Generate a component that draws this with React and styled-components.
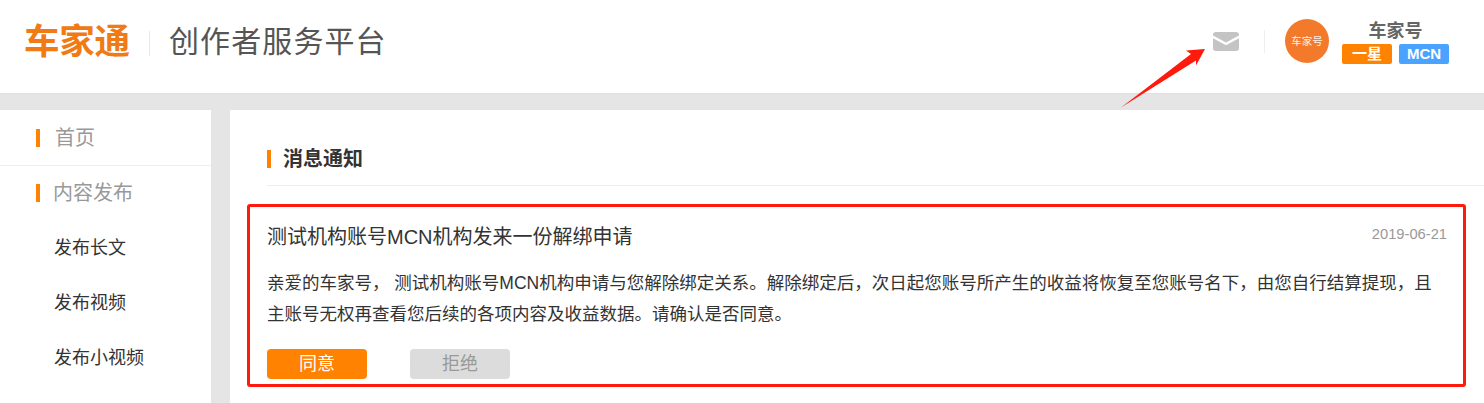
import React from "react";
import styled, { createGlobalStyle } from "styled-components";

const Global = createGlobalStyle`
  html, body { margin: 0; padding: 0; background: #e5e5e5; }
  body { font-family: "Liberation Sans", "Noto Sans CJK SC", sans-serif; }
  * { box-sizing: border-box; }
`;
const Page = styled.div`
  position: relative; width: 1484px; height: 403px; overflow: hidden; background: #e5e5e5;
`;
const Header = styled.header`
  height: 94px; background: #fff; border-bottom: 1px solid #dfdfdf;
  display: flex; align-items: center; padding: 0 35px 0 24px;
`;
const Logo = styled.div`
  width: 106px; font-size: 35.5px; line-height: 36px; font-weight: 700; color: #f07a14; white-space: nowrap;
  letter-spacing: -0.2px; margin-top: -9px;
`;
const LogoSep = styled.span`
  width: 1px; height: 25px; background: #e8e8e8; margin: -7px 19px 0 19px;
`;
const Platform = styled.div`
  font-size: 30px; line-height: 36px; font-weight: 400; color: #555; letter-spacing: 1.1px; margin-top: -9px;
`;
const Right = styled.div`
  margin-left: auto; display: flex; align-items: center;
`;
const Mail = styled.svg`
  width: 26px; height: 19px; display: block; margin-top: -11px;
`;
const RightSep = styled.span`
  width: 1px; height: 23px; background: #eee; margin: -11px 20px 0 25px;
`;
const Avatar = styled.div`
  width: 44px; height: 44px; border-radius: 50%; background: #f47a2b; color: #fff0e6;
  font-size: 10.5px; line-height: 44px; text-align: center; white-space: nowrap; margin-top: -11px;
`;
const User = styled.div`
  width: 107px; margin-left: 13px; display: flex; flex-direction: column; align-items: center; margin-top: -11px;
`;
const UserName = styled.div`
  font-size: 18px; line-height: 26px; height: 26px; font-weight: 700; color: #666; margin-right: 0;
`;
const Badges = styled.div`
  display: flex; gap: 7px;
`;
const Badge = styled.span`
  width: 50px; height: 20px; border-radius: 2px; background: ${p => p.$bg}; color: #fff;
  font-size: 15px; line-height: 20px; font-weight: 700; text-align: center;
`;
const Body = styled.div`
  display: flex; gap: 19px; padding-top: 16px; height: 309px;
`;
const Sidebar = styled.aside`
  width: 211px; background: #fff; flex: none;
`;
const HomeRow = styled.div`
  height: 56px; border-bottom: 1px solid #eee; display: flex; align-items: center; padding-left: 36px;
`;
const SectionRow = styled.div`
  height: 53px; display: flex; align-items: center; padding-left: 36px;
`;
const Mark = styled.i`
  display: block; flex: none; width: 4px; height: 18px; background: #ff8200;
`;
const NavTitle = styled.span`
  font-size: 20px; line-height: 28px; color: #999; margin-left: ${p => p.$gap}px;
`;
const SubList = styled.div`
  padding-top: 2px;
`;
const SubItem = styled.div`
  height: 55px; line-height: 55px; padding-left: 54px; font-size: 18px; color: #333;
`;
const Main = styled.main`
  flex: 1; background: #fff; padding: 0 0 0 17px; min-width: 0;
`;
const Heading = styled.div`
  margin-left: 20px; height: 76px; border-bottom: 1px solid #eee;
  display: flex; align-items: center; padding-top: 23px;
  h2 { margin: 0 0 0 12px; font-size: 20px; line-height: 28px; font-weight: 700; color: #333; }
`;
const Card = styled.section`
  width: 1219px; height: 183px; margin-top: 18px; border: 3px solid #ff1a0e; border-radius: 3px;
  padding: 16px 16px 0 17px;
`;
const CardTop = styled.div`
  display: flex; justify-content: space-between;
`;
const CardTitle = styled.h3`
  margin: 0; font-size: 20px; line-height: 28px; font-weight: 400; color: #333;
`;
const CardDate = styled.time`
  font-size: 14.7px; line-height: 22px; color: #999; margin-right: 0;
`;
const Text = styled.p`
  margin: 17px 0 0; width: 1180px; font-size: 17.5px; line-height: 31px; color: #333;
`;
const Actions = styled.div`
  display: flex; gap: 43px; margin-top: 19px;
`;
const Btn = styled.button`
  width: 100px; height: 30px; border: 0; padding: 0; border-radius: 4px;
  background: ${p => (p.$primary ? "#ff8200" : "#dcdcdc")}; color: ${p => (p.$primary ? "#fff" : "#999")};
  font-family: inherit; font-size: 18px; line-height: 30px;
`;
const Arrow = styled.svg`
  position: absolute; left: 1115px; top: 44px; width: 95px; height: 68px; pointer-events: none;
`;

export default function App() {
  return (
    <Page>
      <Global />
      <Header>
        <Logo>车家通</Logo>
        <LogoSep />
        <Platform>创作者服务平台</Platform>
        <Right>
          <Mail viewBox="0 0 26 19" aria-label="消息">
            <path fill="#c4c4c4" d="M3 0h20a3 3 0 0 1 3 3v.4L13 10.400 0 3.400V3A3 3 0 0 1 3 0Z" />
            <path fill="#c4c4c4" d="M0 6.200 13 13.200l13-7V16a3 3 0 0 1-3 3H3a3 3 0 0 1-3-3Z" />
          </Mail>
          <RightSep />
          <Avatar>车家号</Avatar>
          <User>
            <UserName>车家号</UserName>
            <Badges>
              <Badge $bg="#ff8200">一星</Badge>
              <Badge $bg="#4aa3ff">MCN</Badge>
            </Badges>
          </User>
        </Right>
      </Header>
      <Body>
        <Sidebar>
          <HomeRow><Mark /><NavTitle $gap={15}>首页</NavTitle></HomeRow>
          <SectionRow><Mark /><NavTitle $gap={13}>内容发布</NavTitle></SectionRow>
          <SubList>
            <SubItem>发布长文</SubItem>
            <SubItem>发布视频</SubItem>
            <SubItem>发布小视频</SubItem>
          </SubList>
        </Sidebar>
        <Main>
          <Heading><Mark /><h2>消息通知</h2></Heading>
          <Card>
            <CardTop>
              <CardTitle>测试机构账号MCN机构发来一份解绑申请</CardTitle>
              <CardDate>2019-06-21</CardDate>
            </CardTop>
            <Text>亲爱的车家号， 测试机构账号MCN机构申请与您解除绑定关系。解除绑定后，次日起您账号所产生的收益将恢复至您账号名下，由您自行结算提现，且<br />主账号无权再查看您后续的各项内容及收益数据。请确认是否同意。</Text>
            <Actions>
              <Btn $primary>同意</Btn>
              <Btn>拒绝</Btn>
            </Actions>
          </Card>
        </Main>
      </Body>
      <Arrow viewBox="1115 44 95 68">
        <polygon fill="#ff1a0e" points="1205,49 1186,50.500 1191,54 1121,107.500 1196,60.500 1196,65.500" />
      </Arrow>
    </Page>
  );
}
